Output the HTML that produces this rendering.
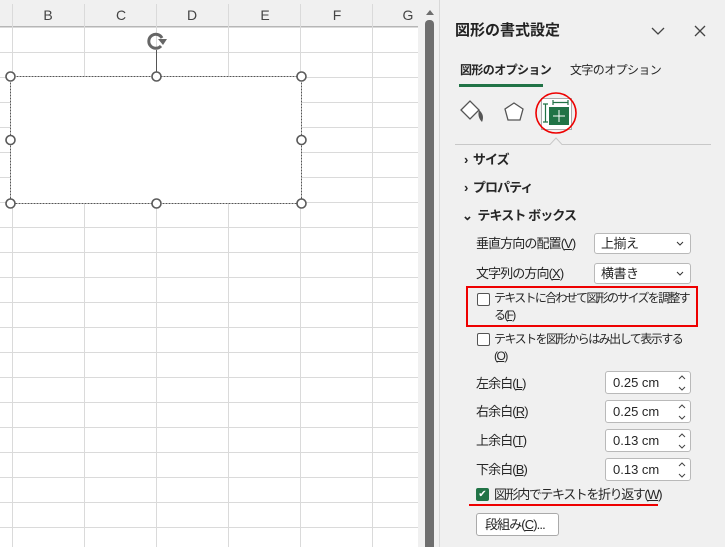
<!DOCTYPE html>
<html><head><meta charset="utf-8"><style>
*{margin:0;padding:0;box-sizing:border-box}
html,body{width:727px;height:547px;overflow:hidden}
body{background:#f0f0f0;font-family:"Liberation Sans","Noto Sans CJK JP",sans-serif;position:relative;color:#262626}
.sheet{position:absolute;left:0;top:0;width:418px;height:547px;background:#fff;
background-image:linear-gradient(to right,#dadada 1px,transparent 1px),linear-gradient(to bottom,#dadada 1px,transparent 1px);
background-size:72px 25px;background-position:12px 2px}
.hdr{position:absolute;left:0;top:0;width:418px;height:27px;background:#f0f0f0;border-bottom:1px solid #b6b6b6}
.hdr span{position:absolute;top:7px;font-size:14px;color:#444;transform:translateX(-50%)}
.hdr i{position:absolute;top:4px;width:1px;height:23px;background:#dadada}
.sb{position:absolute;left:418px;top:0;width:22px;height:547px;background:#f0f0f0;border-right:1px solid #d8d8d8}
.thumb{position:absolute;left:425px;top:20px;width:9px;height:527px;background:#6e6e6e;border-radius:4px 4px 0 0}
.panel{position:absolute;left:441px;top:0;width:286px;height:547px;background:#f0f0f0}
.t{position:absolute;white-space:nowrap;font-size:12px;line-height:16px;letter-spacing:-0.6px}
.l{font-size:13px;letter-spacing:-0.9px}
.u{text-decoration:underline}
.dd{position:absolute;left:594px;width:97px;height:21px;background:#fff;border:1px solid #b9b9b9;border-radius:3px;font-size:13px;line-height:16px;padding:2px 0 0 6px;letter-spacing:-0.5px}
.sp{position:absolute;left:605px;width:86px;height:23px;background:#fff;border:1px solid #b9b9b9;border-radius:3px;font-size:13px;line-height:16px;padding:3px 0 0 7px}
.cb{position:absolute;width:13px;height:13px;border:1px solid #555;border-radius:2px;background:#fff}
.ch{position:absolute;right:6px;top:7px}
</style></head><body>
<div class="sheet"></div>
<div class="hdr">
<span style="left:48px">B</span><span style="left:121px">C</span><span style="left:192px">D</span><span style="left:265px">E</span><span style="left:337px">F</span><span style="left:408px">G</span>
<i style="left:12px"></i><i style="left:84px"></i><i style="left:156px"></i><i style="left:228px"></i><i style="left:300px"></i><i style="left:372px"></i>
</div>
<svg style="position:absolute;left:0;top:0" width="418" height="547">
<rect x="10.5" y="76.5" width="291" height="127" fill="#fff" stroke="#555" stroke-dasharray="2,1"/>
<line x1="156.5" y1="50" x2="156.5" y2="72" stroke="#555" stroke-width="1"/>
<path d="M162 38 A7 7 0 1 0 161 46" fill="none" stroke="#666" stroke-width="3"/>
<path d="M158 39 L167 39 L163 45Z" fill="#666"/>
<g fill="#fff" stroke="#5a5a5a" stroke-width="1.6">
<circle cx="10.5" cy="76.5" r="4.5"/><circle cx="156.5" cy="76.5" r="4.5"/><circle cx="301.5" cy="76.5" r="4.5"/>
<circle cx="10.5" cy="140" r="4.5"/><circle cx="301.5" cy="140" r="4.5"/>
<circle cx="10.5" cy="203.5" r="4.5"/><circle cx="156.5" cy="203.5" r="4.5"/><circle cx="301.5" cy="203.5" r="4.5"/>
</g></svg>
<div class="sb"></div><div class="thumb"></div>
<svg style="position:absolute;left:425px;top:8px" width="10" height="8"><path d="M1 7 L5 2 L9 7Z" fill="#6e6e6e"/></svg>
<div class="panel"></div>
<div class="t" style="left:455px;top:22px;font-size:15px;line-height:18px;font-weight:bold;color:#222;letter-spacing:0">図形の書式設定</div>
<svg style="position:absolute;left:650px;top:24px" width="60" height="14"><path d="M2 4 L8 10 L14 4" fill="none" stroke="#444" stroke-width="1.3"/><path d="M45 2 L55 12 M55 2 L45 12" stroke="#444" stroke-width="1.3"/></svg>
<div class="t" style="left:460px;top:62px;font-size:12px;font-weight:bold;letter-spacing:-0.6px">図形のオプション</div>
<div class="t" style="left:570px;top:62px;font-size:12px;letter-spacing:-0.6px">文字のオプション</div>
<div style="position:absolute;left:459px;top:84px;width:84px;height:3px;background:#217346"></div>
<svg style="position:absolute;left:455px;top:90px" width="272" height="60">
<path d="M6 20 L15 11 L24 20 L15 29Z" fill="#fff" stroke="#555" stroke-width="1.3"/>
<path d="M24 20 Q30 25 27 32 Q22 27 24 20" fill="#555"/>
<path d="M59 13 L68 19 L65 30 L53 30 L50 19Z" fill="#fff" stroke="#555" stroke-width="1.3"/>
<rect x="86.5" y="8.5" width="30" height="31" fill="#fff" stroke="#aaa"/>
<path d="M88 14 h5 M90.5 14 v18 M88 32 h5 M98 10 v5 M98 12.5 h15 M113 10 v5" stroke="#217346" stroke-width="1.2" fill="none"/>
<rect x="94" y="17" width="20" height="18" fill="#217346"/>
<path d="M104 20 v12 M98 26 h12" stroke="#fff" stroke-width="1"/>
<circle cx="101" cy="23" r="20" fill="none" stroke="#e00" stroke-width="1.6"/>
<path d="M0 54.5 H95 L101 48 L107 54.5 H256" fill="none" stroke="#c8c8c8"/>
</svg>
<div class="t l" style="left:464px;top:152px;font-weight:bold">›&nbsp; サイズ</div>
<div class="t l" style="left:464px;top:180px;font-weight:bold">›&nbsp; プロパティ</div>
<div class="t l" style="left:462px;top:208px;font-weight:bold">⌄&nbsp; テキスト ボックス</div>
<div class="t l" style="left:476px;top:236px">垂直方向の配置(<span class="u">V</span>)</div>
<div class="dd" style="top:233px">上揃え<svg class="ch" width="8" height="5"><path d="M1 1 L4 4 L7 1" fill="none" stroke="#333"/></svg></div>
<div class="t l" style="left:476px;top:266px">文字列の方向(<span class="u">X</span>)</div>
<div class="dd" style="top:263px">横書き<svg class="ch" width="8" height="5"><path d="M1 1 L4 4 L7 1" fill="none" stroke="#333"/></svg></div>
<div style="position:absolute;left:466px;top:286px;width:232px;height:41px;border:2px solid #e00"></div>
<div class="cb" style="left:477px;top:293px"></div>
<div class="t" style="left:494px;top:290px;line-height:17px;letter-spacing:-1.7px">テキストに合わせて図形のサイズを調整す<br>る(<span class="u">F</span>)</div>
<div class="cb" style="left:477px;top:333px"></div>
<div class="t" style="left:494px;top:331px;line-height:17px;letter-spacing:-1.5px">テキストを図形からはみ出して表示する<br>(<span class="u">O</span>)</div>
<div class="t l" style="left:476px;top:376px">左余白(<span class="u">L</span>)</div>
<div class="t l" style="left:476px;top:404px">右余白(<span class="u">R</span>)</div>
<div class="t l" style="left:476px;top:433px">上余白(<span class="u">T</span>)</div>
<div class="t l" style="left:476px;top:462px">下余白(<span class="u">B</span>)</div>
<div class="sp" style="top:371px">0.25 cm</div>
<div class="sp" style="top:400px">0.25 cm</div>
<div class="sp" style="top:429px">0.13 cm</div>
<div class="sp" style="top:458px">0.13 cm</div>
<svg style="position:absolute;left:677px;top:374px" width="10" height="110"><g fill="none" stroke="#444"><path d="M2 5 L5 2 L8 5 M2 13 L5 16 L8 13"/><path transform="translate(0,29)" d="M2 5 L5 2 L8 5 M2 13 L5 16 L8 13"/><path transform="translate(0,58)" d="M2 5 L5 2 L8 5 M2 13 L5 16 L8 13"/><path transform="translate(0,87)" d="M2 5 L5 2 L8 5 M2 13 L5 16 L8 13"/></g></svg>
<div style="position:absolute;left:476px;top:488px;width:13px;height:13px;background:#217346;border-radius:2px;color:#fff;font-size:10px;line-height:13px;text-align:center">✔</div>
<div class="t l" style="left:494px;top:487px;letter-spacing:-1.4px">図形内でテキストを折り返す(<span class="u">W</span>)</div>
<div style="position:absolute;left:469px;top:504px;width:189px;height:2px;background:#e00"></div>
<div class="l" style="position:absolute;left:476px;top:513px;width:83px;height:23px;background:#fff;border:1px solid #aaa;border-radius:3px;line-height:16px;padding:3px 0 0 8px">段組み(<span class="u">C</span>)...</div>
<div style="position:absolute;left:725px;top:0;width:2px;height:547px;background:#fff"></div>
</body></html>
